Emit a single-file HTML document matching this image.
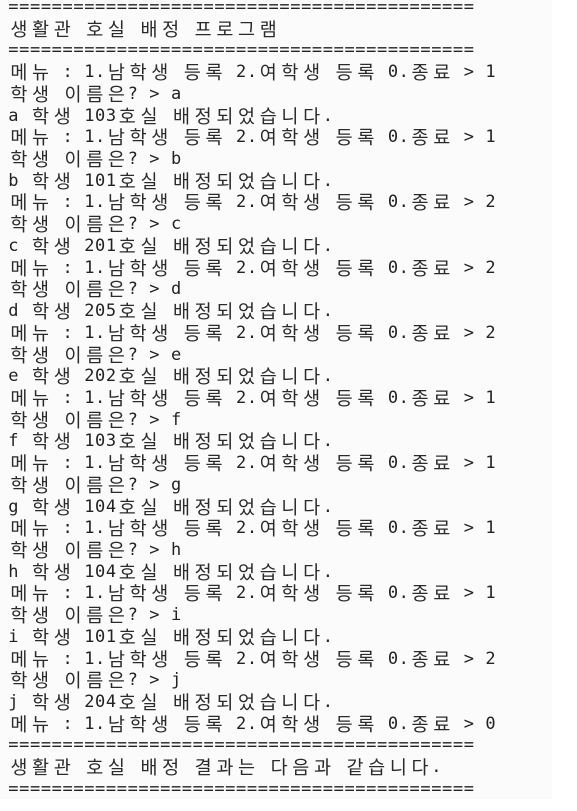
<!DOCTYPE html>
<html><head><meta charset="utf-8"><style>
html,body{margin:0;padding:0;background:#fff;width:577px;height:811px;overflow:hidden}
#bg{position:absolute;left:0;top:0;width:552px;height:799px;background:#fbfbfb}
#t{position:absolute;left:8px;top:-3px;font-family:"DejaVu Sans Mono","Liberation Mono","Noto Sans CJK KR",monospace;font-size:17px;color:#222}
.l{height:21.72px;line-height:21.72px;white-space:nowrap;overflow:visible}
.c,.k{display:inline-block;height:21.72px;line-height:21.72px;vertical-align:top;text-align:center}
.c{width:10.85px}
.k{width:21.7px;font-family:"Noto Sans CJK KR","NanumGothic",sans-serif;font-size:18.5px;color:#2a2a2a}
</style></head><body><div id="bg"></div><div id="t"><div class="l">===========================================</div><div class="l">생활관 호실 배정 프로그램</div><div class="l">===========================================</div><div class="l">메뉴 : 1.남학생 등록 2.여학생 등록 0.종료 > 1</div><div class="l">학생 이름은? > a</div><div class="l">a 학생 103호실 배정되었습니다.</div><div class="l">메뉴 : 1.남학생 등록 2.여학생 등록 0.종료 > 1</div><div class="l">학생 이름은? > b</div><div class="l">b 학생 101호실 배정되었습니다.</div><div class="l">메뉴 : 1.남학생 등록 2.여학생 등록 0.종료 > 2</div><div class="l">학생 이름은? > c</div><div class="l">c 학생 201호실 배정되었습니다.</div><div class="l">메뉴 : 1.남학생 등록 2.여학생 등록 0.종료 > 2</div><div class="l">학생 이름은? > d</div><div class="l">d 학생 205호실 배정되었습니다.</div><div class="l">메뉴 : 1.남학생 등록 2.여학생 등록 0.종료 > 2</div><div class="l">학생 이름은? > e</div><div class="l">e 학생 202호실 배정되었습니다.</div><div class="l">메뉴 : 1.남학생 등록 2.여학생 등록 0.종료 > 1</div><div class="l">학생 이름은? > f</div><div class="l">f 학생 103호실 배정되었습니다.</div><div class="l">메뉴 : 1.남학생 등록 2.여학생 등록 0.종료 > 1</div><div class="l">학생 이름은? > g</div><div class="l">g 학생 104호실 배정되었습니다.</div><div class="l">메뉴 : 1.남학생 등록 2.여학생 등록 0.종료 > 1</div><div class="l">학생 이름은? > h</div><div class="l">h 학생 104호실 배정되었습니다.</div><div class="l">메뉴 : 1.남학생 등록 2.여학생 등록 0.종료 > 1</div><div class="l">학생 이름은? > i</div><div class="l">i 학생 101호실 배정되었습니다.</div><div class="l">메뉴 : 1.남학생 등록 2.여학생 등록 0.종료 > 2</div><div class="l">학생 이름은? > j</div><div class="l">j 학생 204호실 배정되었습니다.</div><div class="l">메뉴 : 1.남학생 등록 2.여학생 등록 0.종료 > 0</div><div class="l">===========================================</div><div class="l">생활관 호실 배정 결과는 다음과 같습니다.</div><div class="l">===========================================</div></div>
<script>
document.querySelectorAll('.l').forEach(function(d){
  var s=d.textContent,h='';
  for(var i=0;i<s.length;i++){
    var ch=s[i],code=ch.charCodeAt(0);
    var e=ch==='<'?'&lt;':ch==='>'?'&gt;':ch==='&'?'&amp;':ch===' '?'&nbsp;':ch;
    h+=(code>=0xAC00&&code<=0xD7A3)?'<span class="k">'+e+'</span>':'<span class="c">'+e+'</span>';
  }
  d.innerHTML=h;
});
</script>
</body></html>
